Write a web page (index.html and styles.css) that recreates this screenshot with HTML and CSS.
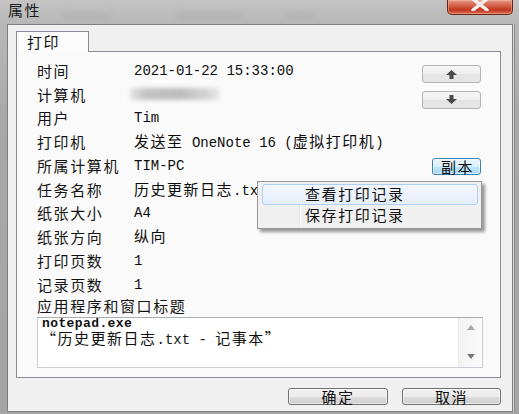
FILE: index.html
```html
<!DOCTYPE html>
<html lang="zh-CN">
<head>
<meta charset="utf-8">
<title>属性</title>
<link rel="stylesheet" href="styles.css">
</head>
<body>
<div class="window">
  <div class="titlebar">
    <span class="title">属性</span>
    <span class="glass g1"></span>
    <span class="glass g2"></span>
    <span class="glass g3"></span>
    <div class="close">
      <svg width="22" height="11" viewBox="0 0 22 11"><path d="M4 -1 L18 10 M18 -1 L4 10" stroke="#fff" stroke-width="3.2" stroke-linecap="round" fill="none"/><path d="M4 -1 L18 10 M18 -1 L4 10" stroke="#5a1a10" stroke-width="0.6" fill="none" opacity="0.25"/></svg>
    </div>
  </div>
  <div class="dialog">
    <div class="tabs"><div class="tab">打印</div></div>
    <div class="panel">
      <div class="grid">
        <div class="lbl">时间</div>
        <div class="val">2021-01-22 15:33:00</div>
        <div class="act"><button class="btn arrow up"><svg width="11" height="9" viewBox="0 0 11 9"><path d="M5.5 0 L11 5 L7.5 5 L7.5 9 L3.5 9 L3.5 5 L0 5 Z" fill="#4a4a4a"/></svg></button></div>

        <div class="lbl">计算机</div>
        <div class="val"><span class="blurred"></span></div>
        <div class="act"><button class="btn arrow down"><svg width="11" height="9" viewBox="0 0 11 9"><path d="M5.5 9 L11 4 L7.5 4 L7.5 0 L3.5 0 L3.5 4 L0 4 Z" fill="#4a4a4a"/></svg></button></div>

        <div class="lbl">用户</div>
        <div class="val">Tim</div>
        <div class="act"></div>

        <div class="lbl">打印机</div>
        <div class="val"><span class="cjk">发送至</span> OneNote 16 (<span class="cjk">虚拟打印机</span>)</div>
        <div class="act"></div>

        <div class="lbl">所属计算机</div>
        <div class="val">TIM-PC</div>
        <div class="act"><button class="btn copy">副本</button></div>

        <div class="lbl">任务名称</div>
        <div class="val"><span class="cjk">历史更新日志</span>.txt</div>
        <div class="act"></div>

        <div class="lbl">纸张大小</div>
        <div class="val">A4</div>
        <div class="act"></div>

        <div class="lbl">纸张方向</div>
        <div class="val"><span class="cjk">纵向</span></div>
        <div class="act"></div>

        <div class="lbl">打印页数</div>
        <div class="val">1</div>
        <div class="act"></div>

        <div class="lbl">记录页数</div>
        <div class="val">1</div>
        <div class="act"></div>
      </div>
      <div class="applbl">应用程序和窗口标题</div>
      <div class="textbox">
        <div class="tb-text">
          <div class="tb-line1">notepad.exe</div>
          <div class="tb-line2"><span class="cjk">“历史更新日志</span>.txt - <span class="cjk">记事本”</span></div>
        </div>
        <div class="scroll">
          <svg width="8" height="5" viewBox="0 0 8 5"><path d="M0 5 L4 0 L8 5 Z" fill="#a8a8a8"/></svg>
          <svg width="8" height="5" viewBox="0 0 8 5"><path d="M0 0 L4 5 L8 0 Z" fill="#7a7a7a"/></svg>
        </div>
      </div>
    </div>
    <div class="footer">
      <button class="btn big ok">确定</button>
      <button class="btn big cancel">取消</button>
    </div>
  </div>
  <div class="menu">
    <div class="gutter"></div>
    <div class="item hot">查看打印记录</div>
    <div class="item">保存打印记录</div>
  </div>
</div>
</body>
</html>
```

FILE: styles.css
```css
* { box-sizing: border-box; }
html, body { margin: 0; padding: 0; }
body {
  width: 519px;
  height: 414px;
  overflow: hidden;
  font-family: "Noto Sans CJK SC", "Noto Sans", sans-serif;
  color: #141414;
}
.window {
  position: relative;
  width: 519px;
  height: 414px;
  display: flex;
  flex-direction: column;
  background: linear-gradient(to bottom, #c4c4c4 0, #b8b8b8 24px, #a8a8a8 120px, #a4a4a4 100%);
}
.titlebar {
  position: relative;
  height: 24px;
  display: flex;
  align-items: flex-start;
  padding-left: 8px;
}
.title {
  font-size: 15px;
  letter-spacing: 1.5px;
  line-height: 15px;
  margin-top: 2px;
  color: #1b1b1b;
}
.glass {
  position: absolute;
  top: 12px;
  height: 7px;
  background: #a4a4a4;
  filter: blur(3px);
  opacity: 0.35;
}
.g1 { left: 62px; width: 48px; }
.g2 { left: 175px; width: 68px; }
.g3 { left: 285px; width: 30px; }
.close {
  margin-left: auto;
  margin-right: 6px;
  width: 66px;
  height: 15px;
  border: 1px solid #6a2417;
  border-top: none;
  border-radius: 0 0 5px 5px;
  background: linear-gradient(to bottom, #e49b87 0, #d5604a 40%, #c2371f 70%, #d66a4e 100%);
  box-shadow: inset 0 0 0 1px rgba(255, 200, 180, 0.45);
  display: flex;
  justify-content: center;
  align-items: flex-start;
}
.close svg { display: block; }

.dialog {
  margin: 0 6px 2px 7px;
  flex: 1;
  background: #f0f0f0;
  border: 1px solid #7e7e7e;
  box-shadow: 1px 0 0 #d8d8d8, 2px 0 0 #8a8a8a;
  padding: 6px 11px 0 8px;
  display: flex;
  flex-direction: column;
}
.tabs {
  display: flex;
  position: relative;
  z-index: 2;
}
.tab {
  width: 73px;
  height: 21px;
  margin-bottom: -1px;
  background: #fcfcfc;
  border: 1px solid #898c95;
  border-bottom: none;
  font-size: 15px;
  letter-spacing: 1.5px;
  line-height: 18px;
  padding-left: 10px;
  padding-top: 1px;
}
.panel {
  height: 327px;
  background: #fafafa;
  border: 1px solid #898c95;
  padding: 7px 19px 0 20px;
  position: relative;
}
.grid {
  display: grid;
  grid-template-columns: 97px 1fr 59px;
  grid-auto-rows: 23.75px;
  align-items: center;
}
.lbl {
  font-size: 15px;
  letter-spacing: 1.6px;
  line-height: 16px;
  white-space: nowrap;
}
.val {
  font-family: "Liberation Mono", "Noto Sans CJK SC", monospace;
  font-size: 14px;
  line-height: 16px;
  white-space: nowrap;
  color: #0c0c0c;
}
.cjk {
  font-family: "Noto Sans CJK SC", sans-serif;
  font-size: 15px;
  letter-spacing: 1.5px;
}
.act {
  align-self: stretch;
  display: flex;
  justify-content: flex-end;
  align-items: flex-start;
}
.blurred {
  display: block;
  width: 90px;
  height: 12px;
  margin-left: -4px;
  margin-top: -2px;
  background: linear-gradient(to right, #e4e4e4 0, #c2c2c2 18%, #bcbcbc 55%, #d4d4d4 85%, #eaeaea 100%);
  filter: blur(2px);
}
.btn {
  font-family: "Noto Sans CJK SC", sans-serif;
  padding: 0;
  margin: 0;
  color: #111;
  display: flex;
  align-items: center;
  justify-content: center;
}
.arrow {
  width: 59px;
  height: 18px;
  border: 1px solid #b4b4b4;
  border-radius: 3px;
  background: linear-gradient(to bottom, #f6f6f6 0, #efefef 50%, #e4e4e4 51%, #e6e6e6 100%);
}
.arrow svg { display: block; }
.up { margin-top: 6px; }
.down { margin-top: 8px; }
.copy {
  width: 49px;
  height: 17px;
  margin-top: 4px;
  border: 1px solid #3c7fb1;
  border-radius: 3px;
  background: linear-gradient(to bottom, #eaf6fd 0, #d9f0fc 50%, #bee6fd 51%, #a7d9f5 100%);
  box-shadow: inset 0 0 0 1px rgba(255,255,255,0.5);
  font-size: 15px;
  letter-spacing: 1.5px;
  line-height: 15px;
  padding-left: 2px;
}
.applbl {
  font-size: 15px;
  letter-spacing: 1.6px;
  line-height: 20px;
  height: 20.5px;
  margin-top: -0.5px;
}
.textbox {
  height: 51px;
  margin-right: -2px;
  background: #ffffff;
  border: 1px solid #c9cdd4;
  border-top-color: #abadb3;
  display: flex;
}
.tb-text {
  flex: 1;
  padding: 0 0 0 4px;
  font-family: "Liberation Mono", monospace;
  font-size: 14px;
  color: #111;
  white-space: nowrap;
}
.tb-line1 { height: 12px; line-height: 12px; font-weight: bold; font-size: 13px; letter-spacing: 0.4px; }
.tb-line2 { height: 15px; line-height: 15px; margin-left: -1px; }
.tb-line2 .cjk { line-height: 15px; }
.scroll {
  width: 24px;
  background: linear-gradient(to right, #f3f3f3, #fafafa);
  border-left: 1px solid #ececec;
  display: flex;
  flex-direction: column;
  align-items: center;
  justify-content: space-between;
  padding: 7px 0 8px;
}
.scroll svg { display: block; }
.footer {
  display: flex;
  justify-content: flex-end;
  gap: 14px;
  margin-top: 10px;
}
.big {
  height: 17px;
  border: 1px solid #707070;
  border-radius: 3px;
  background: linear-gradient(to bottom, #f2f2f2 0, #ebebeb 50%, #dddddd 51%, #cfcfcf 100%);
  box-shadow: inset 0 0 0 1px rgba(255,255,255,0.6);
  font-size: 15px;
  letter-spacing: 1.5px;
  line-height: 15px;
}
.ok { width: 100px; }
.cancel { width: 99px; }

.menu {
  position: absolute;
  left: 257px;
  top: 181px;
  width: 225px;
  height: 48px;
  background: #f0f0f0;
  border: 1px solid #979797;
  box-shadow: 3px 3px 3px rgba(0, 0, 0, 0.4);
  padding: 2px 3px 2px 4px;
  z-index: 5;
}
.gutter {
  position: absolute;
  left: 41px;
  top: 2px;
  bottom: 2px;
  width: 2px;
  border-left: 1px solid #e2e3e3;
  border-right: 1px solid #ffffff;
}
.item {
  position: relative;
  height: 21px;
  padding-left: 43px;
  font-size: 15px;
  letter-spacing: 1.6px;
  line-height: 20px;
  color: #111;
}
.hot {
  border: 1px solid #aecff7;
  border-radius: 3px;
  background: linear-gradient(to bottom, #f2f6fd 0, #e6eefb 100%);
  line-height: 18px;
  padding-left: 42px;
}
```
